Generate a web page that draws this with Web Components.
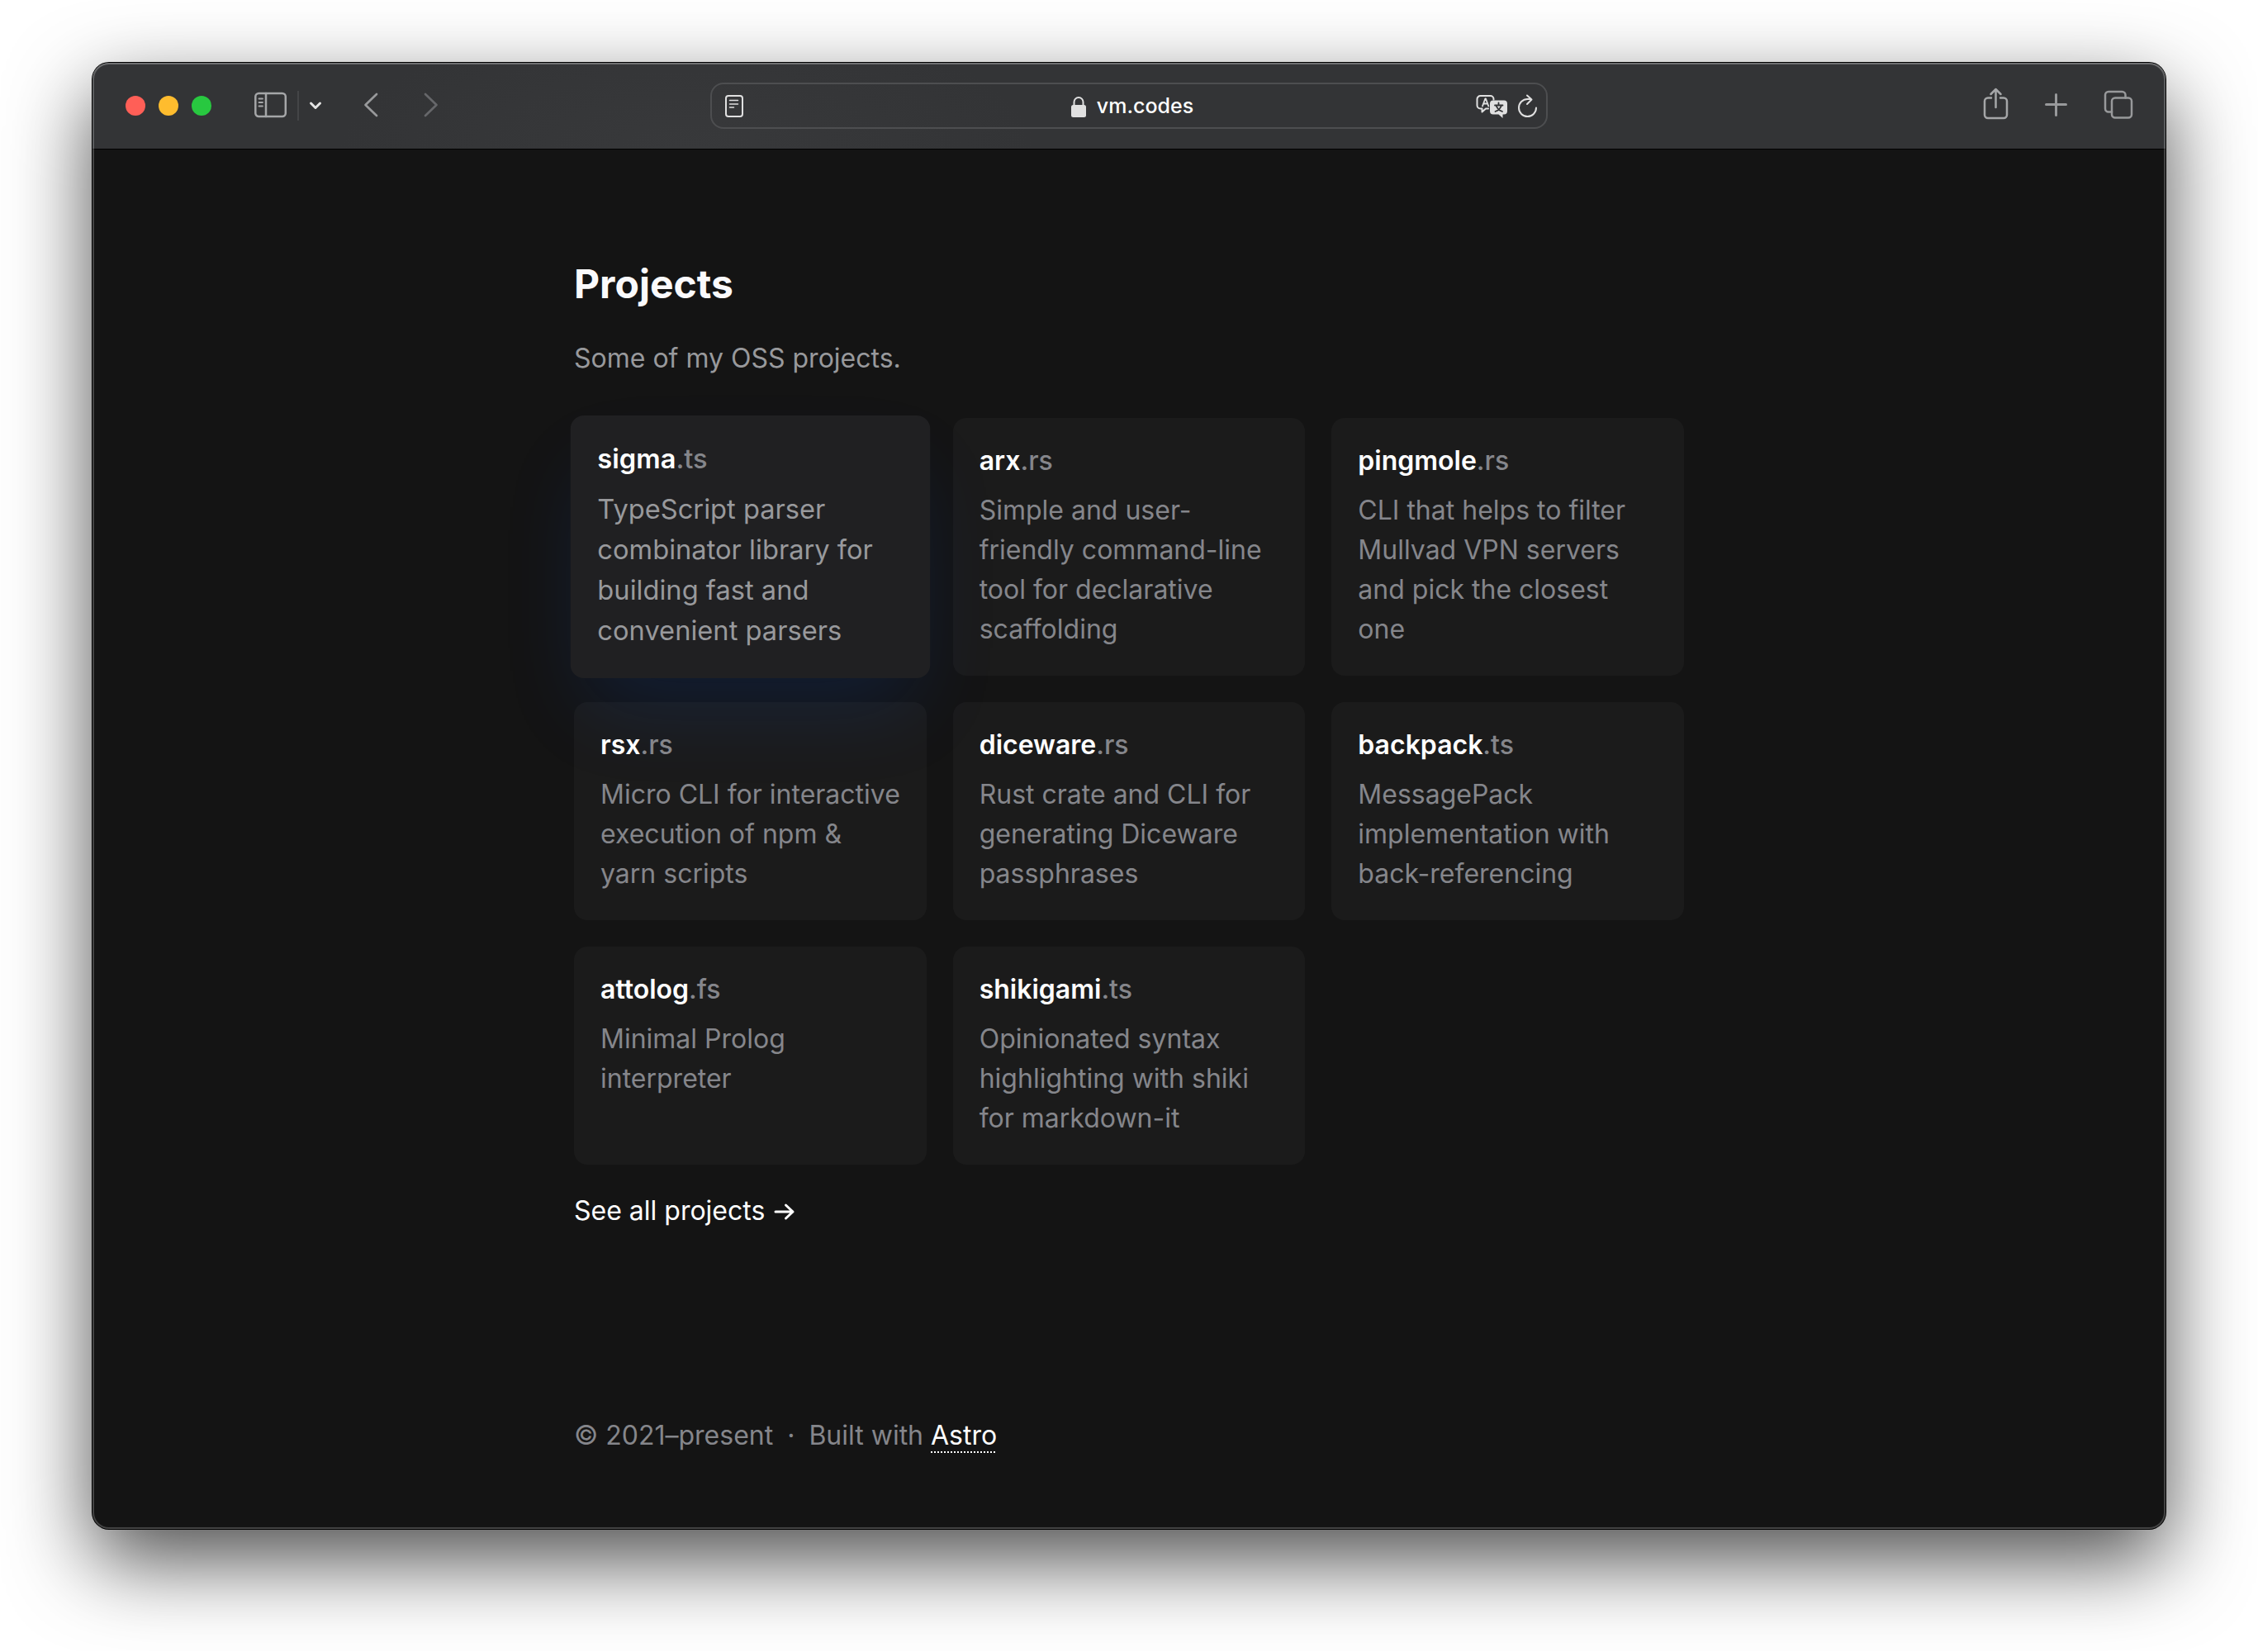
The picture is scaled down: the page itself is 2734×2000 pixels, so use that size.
<!DOCTYPE html>
<html lang="en">
<head>
<meta charset="utf-8">
<meta name="viewport" content="width=device-width, initial-scale=1">
<title>vm.codes</title>
<style>
  body {
    margin: 0;
    padding: 76px 112px 148px;
    background: #fff;
    color: #fff;
    font-family: Inter, "Liberation Sans", sans-serif;
    font-size: 32px;
    line-height: 48px;
  }
</style>
</head>
<body>
<browser-window>
  <window-toolbar slot="toolbar"></window-toolbar>
  <projects-section heading="Projects" intro="Some of my OSS projects.">
    <project-card name="sigma" ext="ts" active>TypeScript parser combinator library for building fast and convenient parsers</project-card>
    <project-card name="arx" ext="rs">Simple and user-friendly command-line tool for declarative scaffolding</project-card>
    <project-card name="pingmole" ext="rs">CLI that helps to filter Mullvad VPN servers and pick the closest one</project-card>
    <project-card name="rsx" ext="rs">Micro CLI for interactive execution of npm &amp; yarn scripts</project-card>
    <project-card name="diceware" ext="rs">Rust crate and CLI for generating Diceware passphrases</project-card>
    <project-card name="backpack" ext="ts">MessagePack implementation with back-referencing</project-card>
    <project-card name="attolog" ext="fs">Minimal Prolog interpreter</project-card>
    <project-card name="shikigami" ext="ts">Opinionated syntax highlighting with shiki for markdown-it</project-card>
  </projects-section>
  <site-footer></site-footer>
</browser-window>

<script>
const define = (name, html, setup) => {
  const template = document.createElement('template');
  template.innerHTML = html;
  customElements.define(name, class extends HTMLElement {
    constructor() {
      super();
      this.attachShadow({ mode: 'open' }).append(template.content.cloneNode(true));
    }
    connectedCallback() {
      if (setup) setup(this, this.shadowRoot);
    }
  });
};

define('browser-window', `
  <style>
    :host {
      display: block;
      position: relative;
      border-radius: 20px;
      background: #141414;
      box-shadow: 0 0 0 1px #000, 0 38px 100px rgba(0, 0, 0, .7);
    }
    /* glass edge over toolbar and page */
    :host::after {
      content: "";
      position: absolute;
      inset: 0;
      border-radius: inherit;
      pointer-events: none;
      box-shadow: inset 0 2px 0 rgba(255, 255, 255, .12), inset 0 0 0 2px rgba(255, 255, 255, .2);
    }
    main {
      box-sizing: border-box;
      max-width: 1408px;
      margin: 0 auto;
      padding: 129px 32px 89px;
      display: flex;
      flex-direction: column;
      gap: 224px;
    }
  </style>
  <slot name="toolbar"></slot>
  <main><slot></slot></main>
`);

define('tool-button', `
  <style>
    :host { display: block; color: #a5a6a8; }
    button {
      display: block;
      margin: 0;
      padding: 0;
      border: 0;
      background: none;
      color: inherit;
    }
    ::slotted(svg) {
      display: block;
      overflow: visible;
      fill: none;
      stroke: currentColor;
      stroke-linecap: round;
      stroke-linejoin: round;
    }
  </style>
  <button type="button"><slot></slot></button>
`, (host, root) => {
  root.querySelector('button').setAttribute('aria-label', host.getAttribute('label'));
});

define('traffic-lights', `
  <style>
    :host { display: flex; gap: 16px; }
    button { width: 24px; height: 24px; padding: 0; border: 0; border-radius: 50%; }
    .close { background: #ff5f57; }
    .minimize { background: #febc2e; }
    .zoom { background: #28c840; }
  </style>
  <button type="button" class="close" aria-label="Close"></button>
  <button type="button" class="minimize" aria-label="Minimize"></button>
  <button type="button" class="zoom" aria-label="Zoom"></button>
`);

define('address-bar', `
  <style>
    :host {
      box-sizing: border-box;
      display: grid;
      grid-template-columns: 1fr auto 1fr;
      align-items: center;
      height: 56px;
      padding: 0 8px 0 15px;
      border: 2px solid #4d4e50;
      border-radius: 16px;
    }
    tool-button { color: #e0e0e0; }
    label { display: flex; align-items: center; gap: 12px; }
    label svg { display: block; }
    input {
      field-sizing: content;
      margin: 0;
      padding: 0;
      border: 0;
      outline: 0;
      background: none;
      color: #fff;
      font: 500 25px/32px Inter, "Liberation Sans", sans-serif;
    }
    .actions { display: flex; justify-content: flex-end; gap: 10px; }
  </style>
  <tool-button label="Reader">
    <svg width="24" height="32" stroke-width="2"><rect x="2" y="4" width="20" height="25" rx="3"/><path d="M6.500 9.500h10M6.500 14h10M6.500 18h5" stroke-width="1.500"/></svg>
  </tool-button>
  <label>
    <svg width="20" height="32" role="img" aria-label="Secure"><rect x="1" y="15" width="18" height="15" rx="2.500" fill="#e0e0e0"/><path d="M4.500 16v-4.500a5.500 5.500 0 0 1 11 0V16" fill="none" stroke="#e0e0e0" stroke-width="2"/></svg>
    <input type="text" value="vm.codes" size="7" aria-label="Address" spellcheck="false">
  </label>
  <div class="actions">
    <tool-button label="Translate">
      <svg width="40" height="32" stroke-width="2">
        <path d="M16 19.500h-3l-4.500 4v-4H6.500a4 4 0 0 1-4-4v-7.500a4 4 0 0 1 4-4h12a4 4 0 0 1 4 4v.500"/>
        <path d="M9 16.500l3.300-9h.7l3.300 9M10.300 13.500h5" stroke-width="1.800"/>
        <path d="M22 9.500h13a4 4 0 0 1 4 4v9a4 4 0 0 1-4 4h-1.500v4.500l-5-4.500H22a4 4 0 0 1-4-4v-9a4 4 0 0 1 4-4z" fill="currentColor" stroke="none"/>
        <path d="M28.500 12.500v2M24 15.500h9.500M32 15.500c-1 3.500-3.500 6-7.500 7.500M25.500 15.500c1 3.500 3.500 6 7.500 7.500" stroke="#333436" stroke-width="1.800"/>
      </svg>
    </tool-button>
    <tool-button label="Reload">
      <svg width="28" height="32" stroke-width="2"><path d="M24 18.500a10.500 10.500 0 1 1-10.500-10.500h4.500M13 3.500l5.500 5-5.500 5.500"/></svg>
    </tool-button>
  </div>
`);

define('window-toolbar', `
  <style>
    :host {
      display: grid;
      grid-template-columns: 1fr minmax(0, 1014px) 1fr;
      align-items: center;
      height: 104px;
      padding: 0 36px 0 40px;
      border-bottom: 1px solid #000;
      border-radius: 20px 20px 0 0;
      background: radial-gradient(420px 160px at 720px 104px, #38393b, #333436) #333436;
    }
    div { display: flex; align-items: center; }
    .start { gap: 44px; }
    traffic-lights { margin-right: 4px; }
    .sidebar { gap: 8px; }
    .sidebar i { width: 2px; height: 36px; background: #444547; }
    .nav { gap: 44px; }
    .end { justify-content: flex-end; gap: 36px; }
    .bright { color: #e4e4e4; }
    .soft { color: #98999b; }
    .dim { color: #66676a; }
    address-bar { margin: 0 2px 0 -2px; }
  </style>
  <div class="start">
    <traffic-lights></traffic-lights>
    <div class="sidebar">
      <tool-button label="Show sidebar">
        <svg width="48" height="40" stroke-width="2.500"><rect x="5.300" y="5" width="36.500" height="28" rx="4"/><path d="M18 5v28"/><path d="M9.500 11.500h4.500M9.500 16h4.500M9.500 20.500h4.500" stroke-width="1.800"/></svg>
      </tool-button>
      <i></i>
      <tool-button class="bright" label="Tab groups">
        <svg width="24" height="40" stroke-width="3"><path d="M6.500 17l5.500 5.500 5.500-5.500"/></svg>
      </tool-button>
    </div>
    <div class="nav">
      <tool-button class="soft" label="Back">
        <svg width="28" height="40" stroke-width="2.700"><path d="M18 6L4.500 19 18 32"/></svg>
      </tool-button>
      <tool-button class="dim" label="Forward">
        <svg width="28" height="40" stroke-width="2.700"><path d="M5 6l13.500 13L5 32"/></svg>
      </tool-button>
    </div>
  </div>
  <address-bar></address-bar>
  <div class="end">
    <tool-button label="Share">
      <svg width="40" height="40" stroke-width="2.500"><path d="M17 10.500h-4a4 4 0 0 0-4 4v16.500a4 4 0 0 0 4 4h19a4 4 0 0 0 4-4V14.500a4 4 0 0 0-4-4h-4M22.500 22V.500M16.500 6l6-6 6 6"/></svg>
    </tool-button>
    <tool-button class="soft" label="New tab">
      <svg width="40" height="40" stroke-width="3"><path d="M19.500 6.500v25M7.500 18.500h24"/></svg>
    </tool-button>
    <tool-button class="soft" label="Tab overview">
      <svg width="40" height="40" stroke-width="2.500"><rect x="11" y="10.500" width="24" height="24" rx="4"/><path d="M11 27.500H7a4 4 0 0 1-4-4V7a4 4 0 0 1 4-4h16.500a4 4 0 0 1 4 4v3.500"/></svg>
    </tool-button>
  </div>
`);

define('projects-section', `
  <style>
    :host { display: block; }
    h2 { margin: 0 0 32px; font-size: 48px; font-weight: 700; line-height: 68px; color: #fafafc; }
    p { margin: 0 0 48px; color: #98999c; }
    .grid { display: grid; grid-template-columns: repeat(3, minmax(0, 1fr)); gap: 32px; margin-bottom: 32px; }
    a { display: inline-flex; align-items: center; gap: 10px; vertical-align: top; color: #fff; text-decoration: none; }
  </style>
  <h2></h2>
  <p></p>
  <div class="grid"><slot></slot></div>
  <a href="#projects">See all projects <svg width="28" height="28" fill="none" stroke="currentColor" stroke-width="3" stroke-linecap="round" stroke-linejoin="round"><path d="M3 15h21M15.500 7l8.500 8-8.500 8"/></svg></a>
`, (host, root) => {
  root.querySelector('h2').textContent = host.getAttribute('heading');
  root.querySelector('p').textContent = host.getAttribute('intro');
});

define('project-card', `
  <style>
    :host {
      display: block;
      position: relative;
      padding: 32px 28px 32px 32px;
      border-radius: 16px;
      background: rgba(255, 255, 255, .03);
      color: #85868b;
    }
    :host([active]) {
      background: #202022;
      color: #98999c;
      transform: scale(1.02);
      box-shadow: 0 50px 100px -20px rgba(10, 90, 240, .15);
    }
    h3 { margin: 0 0 16px; font-size: 32px; font-weight: 600; line-height: 40px; }
    a { color: #fff; text-decoration: none; }
    span { color: #85868b; font-weight: 500; }
    p { margin: 0; }
  </style>
  <h3><a></a></h3>
  <p><slot></slot></p>
`, (host, root) => {
  const link = root.querySelector('a');
  const ext = document.createElement('span');
  ext.textContent = '.' + host.getAttribute('ext');
  link.href = '#' + host.getAttribute('name');
  link.replaceChildren(host.getAttribute('name'), ext);
});

define('site-footer', `
  <style>
    :host { display: block; color: #85868b; }
    footer { display: flex; }
    .dot { margin: 0 17px; }
    a { color: #fff; text-decoration: underline dotted 2px; text-underline-offset: 8px; text-decoration-skip-ink: none; }
  </style>
  <footer><span>© 2021–present</span><span class="dot">·</span><span>Built with <a href="#astro">Astro</a></span></footer>
`);
</script>
</body>
</html>
